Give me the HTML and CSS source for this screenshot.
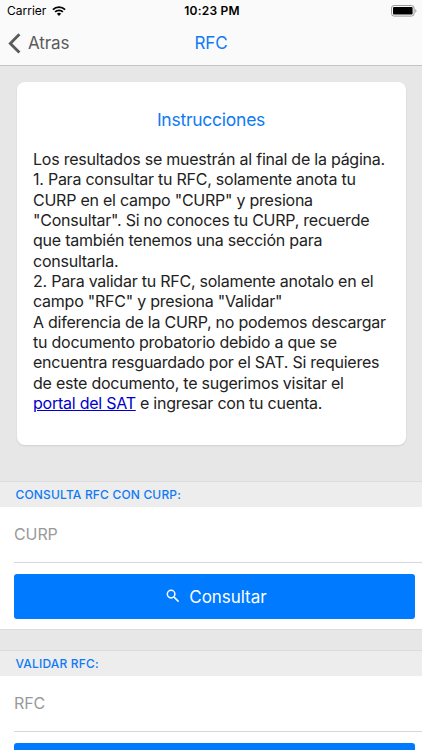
FILE: index.html
```html
<!DOCTYPE html>
<html lang="es">
<head>
    <meta charset="UTF-8">
    <meta name="viewport" content="width=device-width, initial-scale=1">
    <title>RFC</title>
    <link rel="stylesheet" href="styles.css">
</head>
<body>
    <header class="header">
        <div class="status-bar">
            <div class="carrier">
                <span>Carrier</span>
                <svg class="wifi" viewBox="0 0 14 10">
                    <path d="M0.9 3.6a8.7 8.7 0 0 1 12.2 0" />
                    <path d="M3.1 5.9a5.6 5.6 0 0 1 7.8 0" />
                    <path class="wifi-dot" d="M7 10 4.9 7.8a3 3 0 0 1 4.2 0z" />
                </svg>
            </div>
            <span class="time">10:23 PM</span>
            <svg class="battery" viewBox="0 0 26 12">
                <rect class="battery-case" x="0.5" y="0.5" width="22.6" height="10.6" rx="2.6" />
                <rect x="2" y="2" width="19.6" height="7.6" rx="1" />
                <path class="battery-tip" d="M24.3 4v3.8c1.5-.5 1.5-3.3 0-3.8z" />
            </svg>
        </div>
        <nav class="toolbar">
            <a class="back">
                <svg class="chevron" viewBox="0 0 13 21">
                    <path d="M11.4 1.2 2.3 10.4l9.1 9.2" />
                </svg>
                <span>Atras</span>
            </a>
            <h1 class="title">RFC</h1>
        </nav>
    </header>

    <main class="content">
        <section class="card">
            <h2 class="card-title">Instrucciones</h2>
            <p class="card-text">
                Los resultados se muestrán al final de la página.<br>
                1. Para consultar tu RFC, solamente anota tu<br>
                CURP en el campo "CURP" y presiona<br>
                "Consultar". Si no conoces tu CURP, recuerde<br>
                que también tenemos una sección para<br>
                consultarla.<br>
                2. Para validar tu RFC, solamente anotalo en el<br>
                campo "RFC" y presiona "Validar"<br>
                A diferencia de la CURP, no podemos descargar<br>
                tu documento probatorio debido a que se<br>
                encuentra resguardado por el SAT. Si requieres<br>
                de este documento, te sugerimos visitar el<br>
                <a class="link" href="#">portal del SAT</a> e ingresar con tu cuenta.
            </p>
        </section>

        <form class="list">
            <h3 class="list-header">CONSULTA RFC CON CURP:</h3>
            <div class="item">
                <input class="input" type="text" placeholder="CURP">
            </div>
            <button class="button" type="button">
                <svg class="search" viewBox="0 0 14 14">
                    <circle cx="5.1" cy="5.1" r="3.8" />
                    <path d="M8.1 8.1 12.6 12.6" />
                </svg>
                <span>Consultar</span>
            </button>
        </form>

        <form class="list">
            <h3 class="list-header">VALIDAR RFC:</h3>
            <div class="item">
                <input class="input" type="text" placeholder="RFC">
            </div>
            <button class="button" type="button"></button>
        </form>
    </main>
</body>
</html>
```
FILE: styles.css
```css
* {
    box-sizing: border-box;
}
body {
    margin: 0;
    height: 100vh;
    overflow: hidden;
    background: #e7e7e7;
    color: #222;
    font-family: Inter, "Liberation Sans", sans-serif;
}
.header {
    height: 66px;
    background: #fafafa;
    border-bottom: 1px solid #c4c4c4;
}
.status-bar {
    display: grid;
    grid-template-columns: 1fr auto 1fr;
    align-items: center;
    height: 21px;
    padding: 0 5px 0 7px;
    color: #000;
    font-size: 12px;
}
.carrier {
    display: flex;
    align-items: center;
    gap: 6px;
}
.time {
    font-weight: 600;
    letter-spacing: 0.2px;
}
.wifi {
    width: 14px;
    height: 10px;
    fill: none;
    stroke: #000;
    stroke-width: 1.8;
}
.wifi-dot {
    fill: #000;
    stroke: none;
}
.battery {
    justify-self: end;
    width: 26px;
    height: 12px;
}
.battery-case {
    fill: none;
    stroke: #999;
}
.battery-tip {
    fill: #999;
}
.toolbar {
    display: grid;
    grid-template-columns: 1fr auto 1fr;
    align-items: center;
    height: 44px;
    padding: 0 8px;
}
.back {
    display: flex;
    align-items: center;
    gap: 7px;
    color: #5a5a5a;
    font-size: 17px;
    letter-spacing: -0.1px;
}
.chevron {
    width: 13px;
    height: 21px;
    fill: none;
    stroke: #5a5a5a;
    stroke-width: 2.8;
}
.title {
    margin: 0;
    color: #0f7af5;
    font-size: 17px;
    font-weight: 400;
    letter-spacing: -0.1px;
}
.card {
    height: 363px;
    margin: 16px 16.5px 36px 16.5px;
    padding: 27px 0 0 16.5px;
    background: #fff;
    border-radius: 8px;
    box-shadow: 0 1px 2px rgba(0, 0, 0, 0.1);
}
.card-title {
    margin: 0 16.5px 18px 0;
    color: #0f7af5;
    font-size: 17.5px;
    font-weight: 400;
    line-height: 22px;
    letter-spacing: -0.25px;
    text-align: center;
}
.card-text {
    margin: 0;
    font-size: 16px;
    line-height: 20.35px;
    letter-spacing: -0.24px;
    white-space: nowrap;
}
.link {
    color: #0000cc;
}
.list {
    height: 149px;
    margin-bottom: 20px;
    background: #fff;
    border-top: 1px solid #dcdcdc;
    border-bottom: 1px solid #dcdcdc;
}
.list-header {
    height: 25px;
    margin: 0;
    padding-left: 15.5px;
    background: #ededed;
    color: #0f7af5;
    font-size: 12px;
    font-weight: 500;
    line-height: 25px;
    letter-spacing: 0.17px;
}
.item {
    height: 56px;
    margin-left: 14px;
    border-bottom: 1px solid #d8d8dc;
}
.input {
    width: 100%;
    height: 53px;
    padding: 0;
    background: none;
    border: 0;
    outline: 0;
    font: inherit;
    font-size: 16px;
    letter-spacing: -0.1px;
}
.input::placeholder {
    color: #999;
}
.button {
    display: flex;
    justify-content: center;
    align-items: center;
    gap: 9px;
    width: 401px;
    height: 45px;
    margin: 11px 0 0 14.4px;
    padding: 0 0 0 3px;
    background: #007aff;
    border: 0;
    border-radius: 3px;
    color: #fff;
    font-family: inherit;
    font-size: 17px;
    letter-spacing: -0.05px;
}
.search {
    width: 14px;
    height: 14px;
    margin-bottom: 2px;
    fill: none;
    stroke: #fff;
    stroke-width: 1.5;
}
```
